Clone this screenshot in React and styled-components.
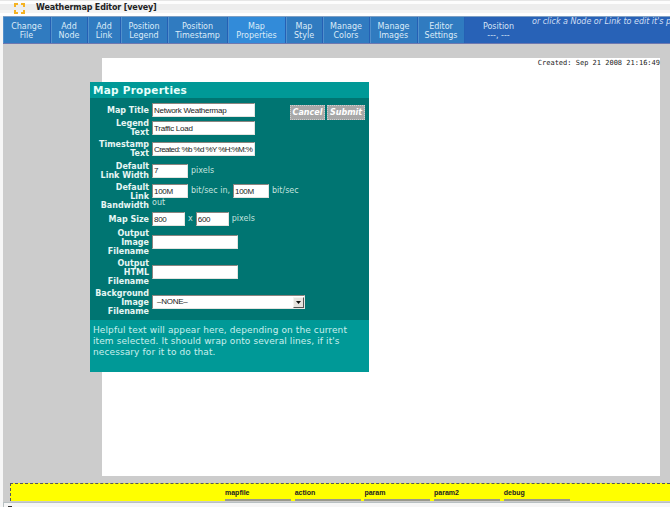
import React from 'react';
import styled, { createGlobalStyle } from 'styled-components';

const sans = '"DejaVu Sans", sans-serif';
const ui = '"Liberation Sans", sans-serif';

const GlobalStyle = createGlobalStyle`
  * { box-sizing: border-box; }
  html, body { margin: 0; padding: 0; overflow: hidden; }
  body { background: #f6f6f6; font-family: ${sans}; }
`;

const Page = styled.div`
  width: 670px;
  height: 507px;
  display: flex;
  flex-direction: column;
  overflow: hidden;
`;

const TitleBar = styled.header`
  flex: none;
  height: 16px;
  display: flex;
  align-items: center;
  padding-left: 14px;
  gap: 11px;
  background: linear-gradient(#e6e6e6 1px, #fdfdfd 1px, #fdfdfd 4px, #ededed 4px, #ededed 10px, #f4f4f4 10px, #f4f4f4 13px, #fff 13px);
`;

const WindowTitle = styled.h1`
  margin: 0;
  font: bold 8px/12px ${sans};
  letter-spacing: -0.15px;
  color: #222;
  white-space: nowrap;
`;

const Toolbar = styled.nav`
  flex: none;
  height: 28px;
  margin-left: 3px;
  display: flex;
  background: #2862b7;
  border-top: 1px solid #7fa0c4;
  border-bottom: 1px solid #6d78b0;
`;

const ToolButton = styled.button`
  flex: none;
  width: ${(p) => p.$width}px;
  margin: 0;
  padding: 1px 0 0;
  border: 0 solid #2560b4;
  border-right-width: 1px;
  box-shadow: inset 1px 0 #5290cc;
  background: ${(p) => (p.$active ? '#328bd9' : '#307bc0')};
  color: #dcebf8;
  font: 8px/9px ${sans};
  text-align: center;
  white-space: pre-line;
`;

const Position = styled.div`
  width: 67px;
  padding-top: 5px;
  color: #d5e3f5;
  font: 8px/9px ${sans};
  text-align: center;
  white-space: pre-line;
`;

const Hint = styled.div`
  flex: 1;
  overflow: hidden;
  color: #d0dff4;
  font: italic 8px/9px ${sans};
  letter-spacing: -0.01px;
  white-space: nowrap;
`;

const Workspace = styled.main`
  position: relative;
  flex: none;
  height: 458px;
  margin-left: 3px;
  padding: 14px 0 0 99px;
  background: #ccc;
`;

const MapCanvas = styled.section`
  width: 558px;
  height: 418px;
  background: #fff;
  color: #222;
  font: 7px/10px "DejaVu Sans Mono", monospace;
  text-align: right;
`;

const Dialog = styled.form`
  position: absolute;
  left: 87px;
  top: 38px;
  width: 279px;
  height: 290px;
  display: flex;
  flex-direction: column;
  background: #007572;
  color: #c4e2df;
  font: 8px/10px ${sans};
`;

const DialogTitle = styled.h2`
  flex: none;
  height: 16px;
  margin: 0;
  padding-left: 3px;
  background: #009997;
  color: #e8fffc;
  font: bold 10.5px/16px ${sans};
  letter-spacing: 0.25px;
`;

const DialogBody = styled.div`
  flex: none;
  display: flex;
  align-items: flex-start;
  height: 222px;
  padding: 4px 4px 0 0;
`;

const Fields = styled.div`
  flex: none;
  width: 200px;
`;

const Field = styled.div`
  display: grid;
  grid-template-columns: 59px auto;
  column-gap: 3px;
  align-items: center;
  justify-content: start;
  height: ${(p) => p.$height}px;
`;

const Label = styled.label`
  color: #e6f6f4;
  font: bold 8px/9px ${sans};
  text-align: right;
  white-space: pre;
`;

const Controls = styled.div`
  display: flex;
  align-items: center;
  gap: 3px;
  white-space: nowrap;
`;

const Stack = styled.div`
  height: 24px;
`;

const Input = styled.input`
  width: ${(p) => p.$width}px;
  height: 14px;
  margin: 0;
  padding: 0 0 0 1px;
  border: 1px solid;
  border-color: #8b8580 #e4e4e0 #e4e4e0 #8b8580;
  border-radius: 0;
  background: #fff;
  color: #222;
  font: 8px/12px ${ui};
  letter-spacing: ${(p) => (p.$tight ? -0.6 : -0.27)}px;
`;

const Select = styled.div`
  width: 153px;
  height: 14px;
  display: flex;
  align-items: center;
  justify-content: space-between;
  padding-left: 4px;
  border: 1px solid;
  border-color: #8b8580 #e4e4e0 #e4e4e0 #8b8580;
  background: #fff;
  color: #222;
  font: 8px/12px ${ui};
  letter-spacing: -0.27px;
`;

const Arrow = styled.span`
  width: 11px;
  height: 11px;
  display: grid;
  place-items: center;
  background: #e6e4df;
  border: 1px solid;
  border-color: #f4f4f0 #555 #555 #f4f4f0;
`;

const Actions = styled.div`
  display: flex;
  gap: 2px;
  padding-top: 3px;
`;

const ActionButton = styled.button`
  width: ${(p) => p.$width}px;
  height: 15px;
  margin: 0;
  padding: 0;
  border: 1px dotted #d0d0d0;
  background: #a8a8a8;
  color: #fff;
  font: italic bold 8px/12px ${sans};
`;

const Help = styled.p`
  flex: 1;
  margin: 0;
  padding: 5px 3px;
  background: #009997;
  color: #c9efed;
  font: 9px/11px ${sans};
  letter-spacing: 0.1px;
  white-space: pre;
`;

const DebugBar = styled.footer`
  flex: none;
  height: 18px;
  margin: -19px 0 1px 10px;
  z-index: 1;
  display: flex;
  gap: 3.7px;
  padding-left: 214px;
  background: #ff0;
  border: 1px dashed #55555f;
  border-width: 1px 0 0 1px;
`;

const DebugItem = styled.div`
  width: 66px;
  height: 17px;
  padding-top: 4px;
  border-bottom: 2px solid #99998c;
  color: #222;
  font: bold 7px/9px ${ui};
`;

const StatusBar = styled.div`
  flex: 1;
  margin-left: 3px;
  padding: 3px 0 0 4px;
  border: 1px solid #b8c0c2;
  border-width: 1px 0 0 1px;
  background: #f6f6f6;
`;

const StatusMark = styled.div`
  width: 4px;
  height: 2px;
  background: #333;
`;

const tools = [
  ['Change\nFile', 48], ['Add\nNode', 37], ['Add\nLink', 33],
  ['Position\nLegend', 47], ['Position\nTimestamp', 60],
  ['Map\nProperties', 58], ['Map\nStyle', 37], ['Manage\nColors', 47],
  ['Manage\nImages', 48], ['Editor\nSettings', 47],
];

const AppIcon = () => (
  <svg width="11" height="11" viewBox="0 0 11 11" fill="none" stroke="#f5b324" strokeWidth="2">
    <path d="M1 4V1h3M7 1h3v3M10 7v3H7M4 10H1V7" />
  </svg>
);

export default function App() {
  return (
    <Page>
      <GlobalStyle />
      <TitleBar>
        <AppIcon />
        <WindowTitle>Weathermap Editor [vevey]</WindowTitle>
      </TitleBar>
      <Toolbar>
        {tools.map(([text, width]) => (
          <ToolButton key={text} $width={width} $active={text.endsWith('Properties')}>{text}</ToolButton>
        ))}
        <Position>{'Position\n---, ---'}</Position>
        <Hint>or click a Node or Link to edit it's p</Hint>
      </Toolbar>
      <Workspace>
        <MapCanvas>Created: Sep 21 2008 21:16:49</MapCanvas>
        <Dialog>
          <DialogTitle>Map Properties</DialogTitle>
          <DialogBody>
            <Fields>
              <Field $height={16}>
                <Label>Map Title</Label>
                <Input $width={103} defaultValue="Network Weathermap" />
              </Field>
              <Field $height={20}>
                <Label>{'Legend\nText'}</Label>
                <Input $width={103} defaultValue="Traffic Load" />
              </Field>
              <Field $height={22}>
                <Label>{'Timestamp\nText'}</Label>
                <Input $width={103} $tight defaultValue="Created: %b %d %Y %H:%M:%" />
              </Field>
              <Field $height={21}>
                <Label>{'Default\nLink Width'}</Label>
                <Controls><Input $width={36} defaultValue="7" />pixels</Controls>
              </Field>
              <Field $height={30}>
                <Label>{'Default\nLink\nBandwidth'}</Label>
                <Stack>
                  <Controls>
                    <Input $width={36} defaultValue="100M" />bit/sec in,
                    <Input $width={36} defaultValue="100M" />bit/sec
                  </Controls>
                  out
                </Stack>
              </Field>
              <Field $height={16}>
                <Label>Map Size</Label>
                <Controls>
                  <Input $width={33} defaultValue="800" />x<Input $width={33} defaultValue="600" />pixels
                </Controls>
              </Field>
              <Field $height={30}>
                <Label>{'Output\nImage\nFilename'}</Label>
                <Input $width={86} />
              </Field>
              <Field $height={30}>
                <Label>{'Output\nHTML\nFilename'}</Label>
                <Input $width={86} />
              </Field>
              <Field $height={30}>
                <Label>{'Background\nImage\nFilename'}</Label>
                <Select>
                  –NONE–
                  <Arrow>
                    <svg width="5" height="3" viewBox="0 0 5 3"><path d="M0 0h5L2.5 3z" fill="#111" /></svg>
                  </Arrow>
                </Select>
              </Field>
            </Fields>
            <Actions>
              <ActionButton type="button" $width={35}>Cancel</ActionButton>
              <ActionButton type="button" $width={38}>Submit</ActionButton>
            </Actions>
          </DialogBody>
          <Help>{"Helpful text will appear here, depending on the current\nitem selected. It should wrap onto several lines, if it's\nnecessary for it to do that."}</Help>
        </Dialog>
      </Workspace>
      <DebugBar>
        {['mapfile', 'action', 'param', 'param2', 'debug'].map((name) => (
          <DebugItem key={name}>{name}</DebugItem>
        ))}
      </DebugBar>
      <StatusBar><StatusMark /></StatusBar>
    </Page>
  );
}
